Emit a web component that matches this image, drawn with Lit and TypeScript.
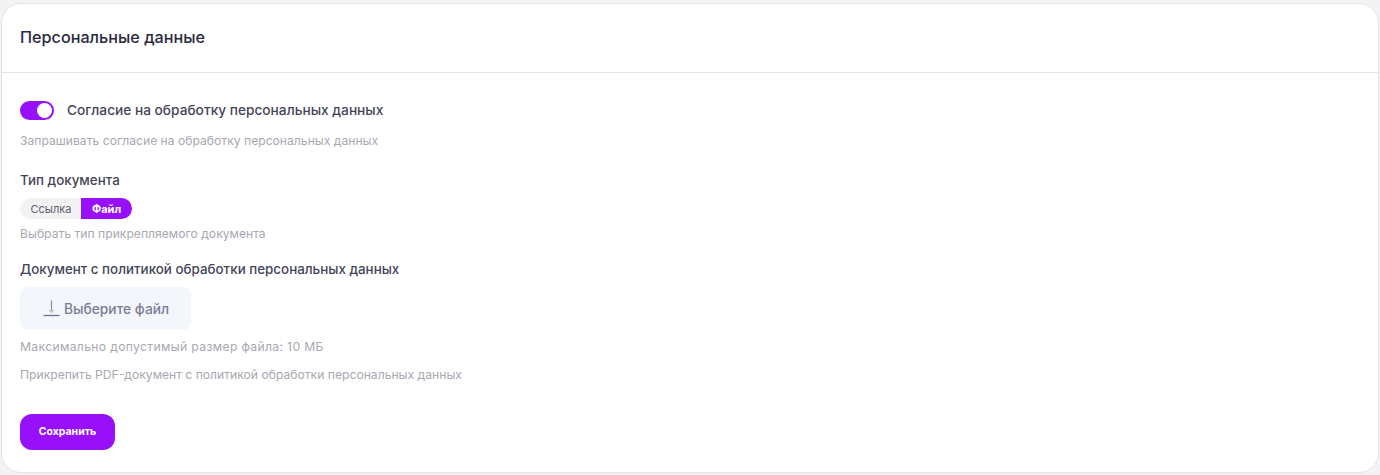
import { LitElement, html, css } from "lit";
import { customElement } from "lit/decorators.js";

@customElement("app-root")
export class AppRoot extends LitElement {
  static styles = css`
    :host { display: block; width: 1380px; height: 475px; box-sizing: border-box; padding: 3px 1px 2px 1px; background: #f3f3f5; font-family: Inter, "Noto Sans", sans-serif; overflow: hidden; }
    .card { box-sizing: border-box; height: 470px; background: #fff; border: 1px solid #e4e4e9; border-radius: 20px; }
    .head { height: 69px; box-sizing: border-box; padding: 0 18px 2px; display: flex; align-items: center; border-bottom: 1px solid #e3e3ea; font-size: 16.2px; font-weight: 500; color: #2a2a3e; }
    .body { padding: 27px 18px 0; display: flex; flex-direction: column; align-items: flex-start; }
    .row { display: flex; align-items: center; gap: 13px; height: 20px; font-size: 13.7px; font-weight: 500; color: #454558; }
    .toggle { width: 34px; height: 19px; margin-top: 1px; border-radius: 10px; background: #9810fa; position: relative; }
    .knob { position: absolute; right: 2px; top: 2px; width: 15px; height: 15px; border-radius: 50%; background: #fff; }
    .hint { font-size: 12.15px; line-height: 16px; color: #a8a8b2; }
    .wide { letter-spacing: 0.35px; }
    .label { font-size: 13.38px; line-height: 18px; font-weight: 500; color: #454558; }
    .seg { display: flex; height: 21px; font-size: 11px; line-height: 22px; }
    .seg div { box-sizing: border-box; text-align: center; }
    .off { width: 61px; background: #f3f3f4; color: #60606a; border-radius: 11px 0 0 11px; font-weight: 400; padding-left: 1px; }
    .on { width: 51px; background: #9810fa; color: #fff; border-radius: 0 11px 11px 0; font-weight: 700; }
    .file { width: 171px; height: 43px; box-sizing: border-box; padding-left: 1px; border-radius: 8px; background: #f3f6fa; display: flex; align-items: center; justify-content: center; gap: 4px; color: #7c7c97; font-size: 13.8px; font-weight: 500; }
    .save { width: 95px; height: 36px; box-sizing: border-box; padding-bottom: 1px; border-radius: 12px; background: #9810fa; color: #fff; font-size: 10.5px; font-weight: 700; display: flex; align-items: center; justify-content: center; }
    .m1 { margin-top: 13px; }
    .m2 { margin-top: 22px; }
    .m3 { margin-top: 9px; }
    .m4 { margin-top: 7px; }
    .m5 { margin-top: 18px; }
    .m6 { margin-top: 9px; }
    .m7 { margin-top: 9px; }
    .m8 { margin-top: 12px; }
    .m9 { margin-top: 31px; }
  `;

  render() {
    return html`<div class="card">
      <div class="head">Персональные данные</div>
      <div class="body">
        <div class="row"><div class="toggle"><div class="knob"></div></div><span>Согласие на обработку персональных данных</span></div>
        <div class="hint m1">Запрашивать согласие на обработку персональных данных</div>
        <div class="label m2">Тип документа</div>
        <div class="seg m3"><div class="off">Ссылка</div><div class="on">Файл</div></div>
        <div class="hint m4">Выбрать тип прикрепляемого документа</div>
        <div class="label m5">Документ с политикой обработки персональных данных</div>
        <div class="file m6">
          <svg width="17" height="17" viewBox="0 0 17 17" fill="none"><path d="M8.5 0.5V12" stroke="#8b8ba3" stroke-width="1.2"/><path d="M5.5 10h6L8.5 13.5z" fill="#c4c4d0"/><path d="M0.5 15.5h16" stroke="#71718f" stroke-width="1.3"/></svg>
          <span>Выберите файл</span>
        </div>
        <div class="hint wide m7">Максимально допустимый размер файла: 10 МБ</div>
        <div class="hint m8">Прикрепить PDF-документ с политикой обработки персональных данных</div>
        <div class="save m9">Сохранить</div>
      </div>
    </div>`;
  }
}
